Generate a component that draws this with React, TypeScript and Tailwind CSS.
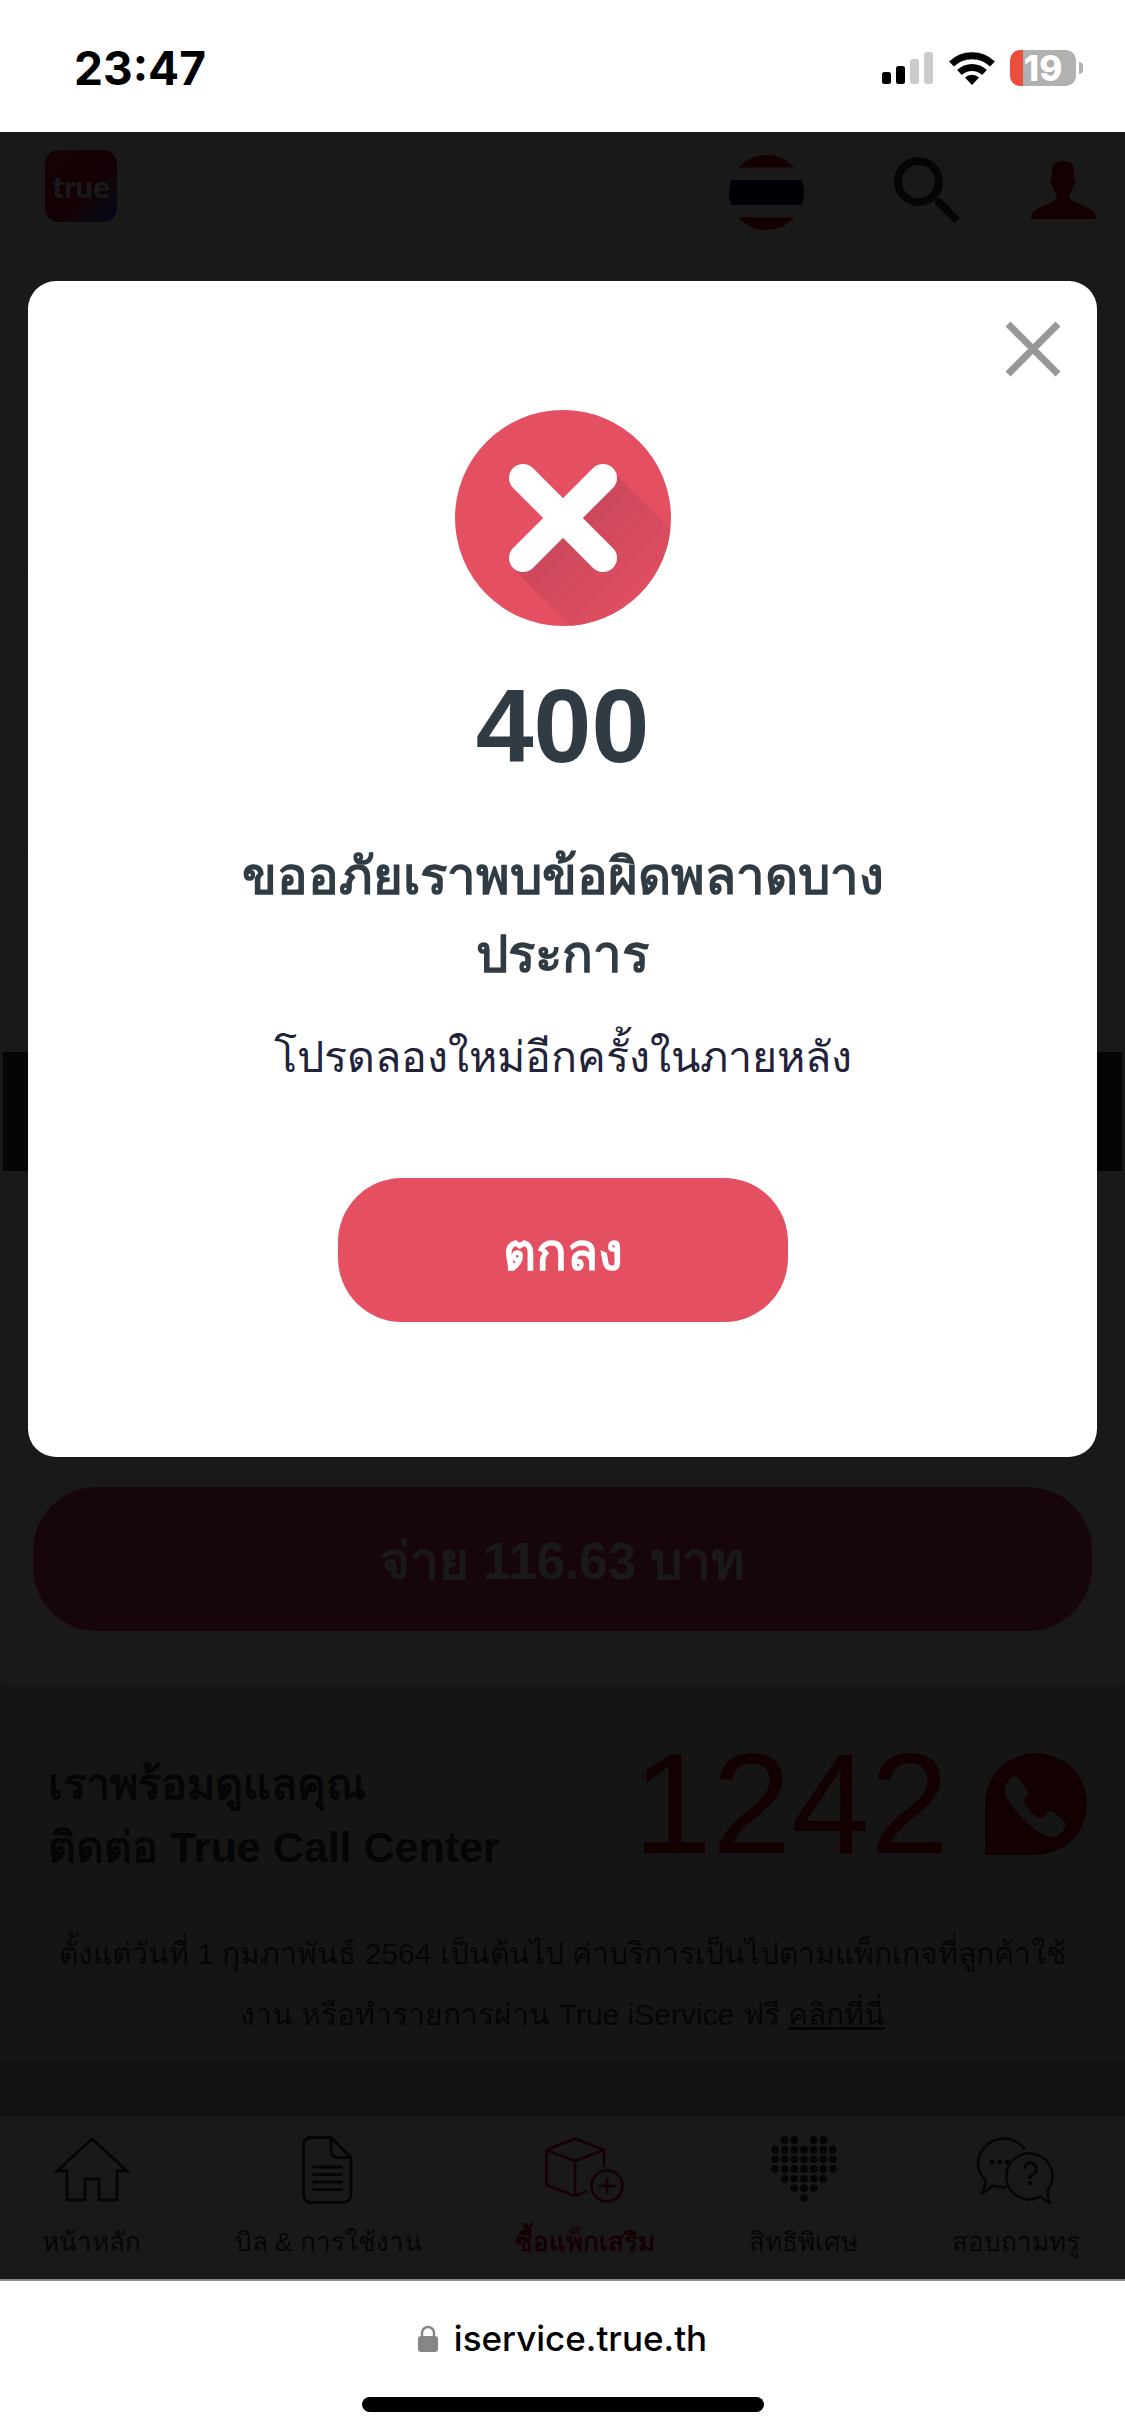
import type { ReactNode } from 'react'

const heartRows = [
  [1, 2, 4, 5],
  [0, 1, 2, 3, 4, 5, 6],
  [0, 1, 2, 3, 4, 5, 6],
  [0, 1, 2, 3, 4, 5, 6],
  [1, 2, 3, 4, 5],
  [2, 3, 4],
  [3],
]

function HomeIcon() {
  return (
    <svg className="h-17 w-19" viewBox="0 0 76 68" fill="none" stroke="currentColor" strokeWidth="2.8">
      <path d="M38 3 3 35h10v29h18V43h14v21h18V35h10z" />
    </svg>
  )
}

function BillIcon() {
  return (
    <svg className="h-17 w-13" viewBox="0 0 52 68" fill="none" stroke="currentColor" strokeWidth="3">
      <path d="M8.5 1.5H29l20 20V59a7.5 7.5 0 0 1-7.5 7.5H9A7.5 7.5 0 0 1 1.5 59V8.5a7 7 0 0 1 7-7z" />
      <path d="M29 1.5v13q0 7 7 7h13" />
      <path d="M10.5 31h30M10.5 38.5h30M10.5 46h30M10.5 53.5h30" />
    </svg>
  )
}

function PackageIcon() {
  return (
    <svg className="h-17 w-20" viewBox="0 0 80 68" fill="none" stroke="currentColor" strokeWidth="2.8">
      <path d="M59 31V14L30 2.5 1.5 14v35L30 60l12-5" />
      <path d="M1.5 14 30 25l29-11M30 25v35" />
      <circle cx="62" cy="50" r="15.5" />
      <path d="M62 41.5v17M53.5 50h17" />
    </svg>
  )
}

function HeartIcon() {
  return (
    <svg className="h-17 w-17" viewBox="0 0 68 68" fill="currentColor">
      {heartRows.map((cols, row) =>
        cols.map((col) => <circle key={`${row}-${col}`} cx={5 + col * 9.66} cy={4 + row * 9.66} r="3.9" />),
      )}
    </svg>
  )
}

function ChatIcon() {
  return (
    <svg className="h-[70px] w-20" viewBox="0 0 80 70" fill="none" stroke="currentColor" strokeWidth="2.6">
      <path d="M49 14.5A26 26 0 0 0 2 27Q2 37 9 45q1 6-3 13 6-2 10-7.5 7 2.5 15 1.5" />
      <path d="M71.5 55.5A23 23 0 1 0 64.5 61.5q4 4 9 6-2-5-2-12z" />
      <path d="M48.5 33.5a6 6 0 1 1 9 5.5q-3.5 2-3.5 5" strokeWidth="3" />
      <g fill="currentColor" stroke="none">
        <circle cx="54" cy="48" r="2.2" />
        <circle cx="16" cy="27" r="2.5" />
        <circle cx="23.5" cy="27" r="2.5" />
        <circle cx="31" cy="27" r="2.5" />
      </g>
    </svg>
  )
}

function StatusBar() {
  return (
    <div className="flex h-33 shrink-0 items-center justify-between bg-white pt-1 pr-[42px] pl-[74px] font-['Inter',sans-serif] text-black">
      <span className="text-[46px] leading-none font-bold">23:47</span>
      <div className="flex items-center gap-[15px]">
        <svg className="h-8 w-[52px]" viewBox="0 0 52 32">
          <rect x="0" y="20" width="9" height="12" rx="2.5" />
          <rect x="14" y="14" width="9" height="18" rx="2.5" />
          <g fill="#cbcbcb">
            <rect x="28" y="7" width="9" height="25" rx="2.5" />
            <rect x="42" y="0" width="9" height="32" rx="2.5" />
          </g>
        </svg>
        <svg className="h-[33px] w-[46px]" viewBox="0 0 46 33" fill="none" stroke="#000">
          <path d="M2.5 12a29.5 29.5 0 0 1 41 0" strokeWidth="7" />
          <path d="M10.5 20.5a18 18 0 0 1 25 0" strokeWidth="7" />
          <path d="M23 33l-7-7.5a10 10 0 0 1 14 0z" fill="#000" stroke="none" />
        </svg>
        <div className="flex items-center gap-[3px]">
          <div className="flex h-9 w-[66px] items-center justify-center rounded-[10px] bg-linear-to-r from-[#eb4e3d] from-20% to-[#b1b1b1] to-20% text-[35px] leading-none font-extrabold text-white">
            19
          </div>
          <span className="h-3 w-1 rounded-r-full bg-[#b1b1b1]" />
        </div>
      </div>
    </div>
  )
}

function Header() {
  return (
    <header className="flex h-[124px] items-start justify-between border-b-4 border-[#e4e4e4] bg-white pt-[18px] pr-7 pl-[45px]">
      <a
        href="#home"
        className="flex h-18 w-18 items-center justify-center rounded-[14px] bg-linear-to-br from-[#c8202c] from-0% via-[#c00030] via-60% to-[#1030ff] font-['Lato',sans-serif] text-[31px] leading-none font-black text-white"
      >
        true
      </a>
      <div className="flex items-center">
        <button aria-label="ภาษาไทย" className="mt-[5px] mr-[90px]">
          <svg className="h-[75px] w-[75px]" viewBox="0 0 75 75">
            <clipPath id="flag">
              <circle cx="37.5" cy="37.5" r="37.5" />
            </clipPath>
            <g clipPath="url(#flag)">
              <path d="M0 0h75v12.5H0zM0 62.5h75V75H0z" fill="#d80010" />
              <path d="M0 25h75v25H0z" fill="#00003c" />
            </g>
          </svg>
        </button>
        <button aria-label="ค้นหา" className="mr-[71px]">
          <svg className="h-[66px] w-[66px]" viewBox="0 0 66 66">
            <circle cx="24.5" cy="24.5" r="20.5" fill="none" stroke="#303b44" strokeWidth="8" />
            <path d="M41 41.5h6L66 61l-5.5 5L41 47z" fill="#303b44" />
          </svg>
        </button>
        <button aria-label="บัญชีของฉัน">
          <svg className="h-[60px] w-[66px]" viewBox="0 0 66 60" fill="#d80010">
            <path d="M32 1c8 0 11 4 11 9v7c2 1 2 3 1.5 5.5S43 26 42 26q-1 5-3.5 9c-.5 4 1.5 5 4.5 6.5l15 7q7 3 7 10.5H0q0-7 7-10.5l15-7c3-1.5 4-3 3.5-6.5Q23 31 22 26c-1 0-2-1-2.5-3.5S19 18 21 17v-7c0-5 3-9 11-9z" />
          </svg>
        </button>
      </div>
    </header>
  )
}

function CallCenter() {
  return (
    <section className="flex h-94 flex-col bg-[#d4d4d4] px-12 pt-12 text-[#303b44]">
      <div className="-mr-[10px] flex items-start justify-between">
        <p className="mt-5 text-[43px] leading-[63px] font-bold whitespace-nowrap">
          เราพร้อมดูแลคุณ
          <br />
          ติดต่อ True Call Center
        </p>
        <a href="tel:1242" className="flex items-center gap-9 text-[#c4000c]">
          <span className="text-[142px] leading-none">1242</span>
          <svg className="h-[102px] w-[102px]" viewBox="0 0 102 102">
            <path d="M0 102V51a51 51 0 1 1 51 51z" fill="currentColor" />
            <path
              d="M27 24q4-2 6 1l9 12q2 3 0 6l-3 3q-1 2 1 5 6 9 14 14 2 1 4-1l5-5q3-2 6 0l10 10q3 3 1 6-5 9-12 9-12 0-30-18-17-18-18-28 0-8 7-14z"
              fill="#d4d4d4"
            />
          </svg>
        </a>
      </div>
      <p className="mt-11 text-center text-[30px] leading-[61px] whitespace-nowrap">
        ตั้งแต่วันที่ 1 กุมภาพันธ์ 2564 เป็นต้นไป ค่าบริการเป็นไปตามแพ็กเกจที่ลูกค้าใช้
        <br />
        งาน หรือทำรายการผ่าน True iService ฟรี{' '}
        <a href="#free" className="underline decoration-3">
          คลิกที่นี่
        </a>
      </p>
    </section>
  )
}

function NavItem({ icon, label, active }: { icon: ReactNode; label: string; active?: boolean }) {
  return (
    <a
      href="#nav"
      className={`flex flex-col items-center whitespace-nowrap text-[26px] leading-10 ${
        active ? 'font-bold text-[#d0102c]' : 'text-[#303b44]'
      }`}
    >
      <span className="flex h-17 items-center">{icon}</span>
      <span className="mt-[18px]">{label}</span>
    </a>
  )
}

function ErrorDialog() {
  return (
    <div
      role="dialog"
      aria-modal="true"
      aria-labelledby="error-title"
      className="relative mx-7 mt-[149px] flex h-[1176px] flex-col items-center rounded-[28px] bg-white text-center"
    >
      <button aria-label="ปิด" className="absolute top-10 right-9">
        <svg className="h-14 w-14" viewBox="0 0 56 56" stroke="#979797" strokeWidth="7">
          <path d="M3 3l50 50M53 3 3 53" />
        </svg>
      </button>
      <svg className="mt-[129px] h-54 w-54" viewBox="0 0 216 216">
        <defs>
          <linearGradient id="shade" x1="0.3" y1="0.3" x2="0.7" y2="0.7">
            <stop offset="0" stopColor="#cd485b" />
            <stop offset="1" stopColor="#e44f62" />
          </linearGradient>
          <clipPath id="disc">
            <circle cx="108" cy="108" r="108" />
          </clipPath>
        </defs>
        <circle cx="108" cy="108" r="108" fill="#e44f62" />
        <path d="M158 62 258 162 162 262 58 158z" fill="url(#shade)" clipPath="url(#disc)" />
        <path d="M68 68l80 80M148 68l-80 80" stroke="#fff" strokeWidth="28" strokeLinecap="round" />
      </svg>
      <h2 className="mt-10 text-[104px] leading-[120px] font-bold text-[#303b44]">400</h2>
      <p id="error-title" className="mt-[52px] text-[51px] leading-[78px] font-bold whitespace-nowrap text-[#303b44]">
        ขออภัยเราพบข้อผิดพลาดบาง
        <br />
        ประการ
      </p>
      <p className="mt-6 text-[43px] leading-[78px] whitespace-nowrap text-[#22223a]">
        โปรดลองใหม่อีกครั้งในภายหลัง
      </p>
      <button className="mt-[82px] h-36 w-[450px] rounded-[64px] bg-[#e44f62] pt-1 text-[51px] leading-none font-bold text-white">
        ตกลง
      </button>
    </div>
  )
}

export default function App() {
  return (
    <div className="flex min-h-screen flex-col bg-white font-['Liberation_Sans',sans-serif]">
      <StatusBar />

      <div className="relative">
        <Header />
        <main>
          <div className="border-x-3 border-[#f4f4f4] bg-white">
            <div className="h-[314px] border-b-3 border-[#e4e4e4]" />
            <div className="h-70 border-b-3 border-[#e4e4e4]" />
            <div className="h-[202px]" />
            <div className="h-[119px] bg-[#303b44]" />
            <div className="h-65 border-b-2 border-[#ececec]" />
            <div className="px-[30px] pt-[56px] pb-[54px]">
              <button className="h-36 w-full rounded-[64px] bg-[#e03c5c] pt-1 text-[51px] leading-none font-bold text-white">
                จ่าย 116.63 บาท
              </button>
            </div>
          </div>
          <CallCenter />
          <div className="h-[54px] bg-[#aaa]" />
        </main>
        <nav className="flex h-41 justify-between border-t border-[#707070] bg-white pt-5 pr-[45px] pl-[42px]">
          <NavItem icon={<HomeIcon />} label="หน้าหลัก" />
          <NavItem icon={<BillIcon />} label="บิล & การใช้งาน" />
          <NavItem icon={<PackageIcon />} label="ซื้อแพ็กเสริม" active />
          <NavItem icon={<HeartIcon />} label="สิทธิพิเศษ" />
          <NavItem icon={<ChatIcon />} label="สอบถามทรู" />
        </nav>

        <div className="absolute inset-0 bg-black/90">
          <ErrorDialog />
        </div>
      </div>

      <div className="flex flex-1 flex-col items-center border-t-2 border-[#8a8a8c] bg-white pt-[37px] font-['Inter',sans-serif]">
        <div className="flex items-center gap-4 text-[35px] leading-10 font-medium text-black">
          <svg className="h-[27px] w-5" viewBox="0 0 20 27">
            <rect x="0" y="11" width="20" height="16" rx="3" fill="#868688" />
            <path d="M4 12V8a6 6 0 0 1 12 0v4" fill="none" stroke="#868688" strokeWidth="2.5" />
          </svg>
          iservice.true.th
        </div>
        <div className="mt-auto mb-6 h-[15px] w-[402px] rounded-full bg-black" />
      </div>
    </div>
  )
}
